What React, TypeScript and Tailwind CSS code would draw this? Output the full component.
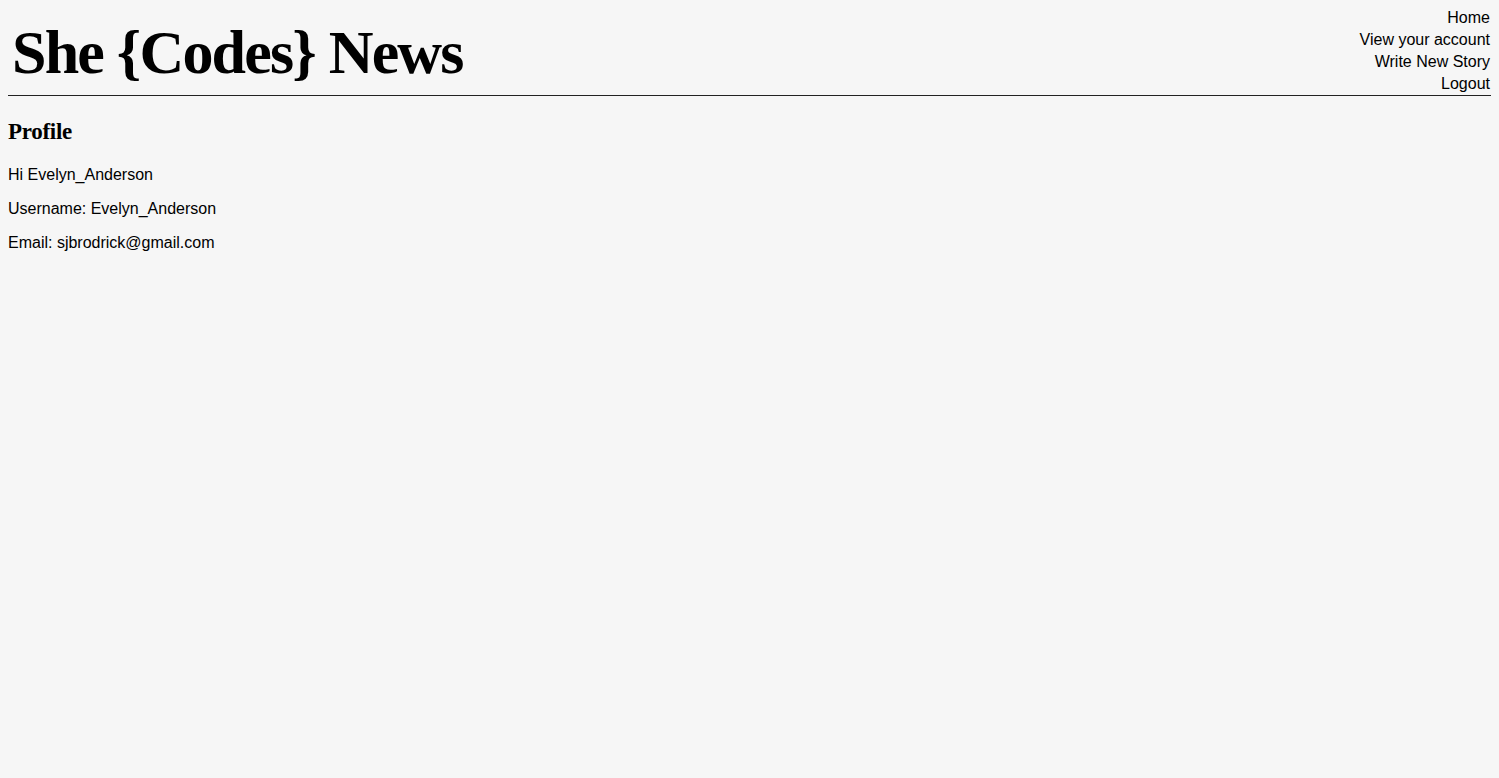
export default function App() {
  return (
    <div className="min-h-screen bg-[#f6f6f6] px-2 text-black font-['Liberation_Sans',Arial,sans-serif]">
      {/* Header */}
      <header className="flex justify-between items-end border-b border-[#222]">
        <h1 className="pl-[4px] pb-[12px] text-[62px] leading-none font-bold tracking-[-1.8px] font-['Liberation_Serif','Times_New_Roman',serif]">
          She {"{Codes}"} News
        </h1>
        <nav className="flex flex-col items-end pt-[7px] pr-[1px] text-base leading-[22px]">
          <a href="#">Home</a>
          <a href="#">View your account</a>
          <a href="#">Write New Story</a>
          <a href="#">Logout</a>
        </nav>
      </header>

      {/* Profile */}
      <main className="pt-[23px]">
        <h2 className="text-[23px] leading-[26px] font-bold tracking-[-0.3px] font-['Liberation_Serif','Times_New_Roman',serif]">
          Profile
        </h2>
        <div className="mt-[18px] flex flex-col gap-[10px] text-base leading-[24px]">
          <p>Hi Evelyn_Anderson</p>
          <p>Username: Evelyn_Anderson</p>
          <p>Email: sjbrodrick@gmail.com</p>
        </div>
      </main>
    </div>
  );
}
